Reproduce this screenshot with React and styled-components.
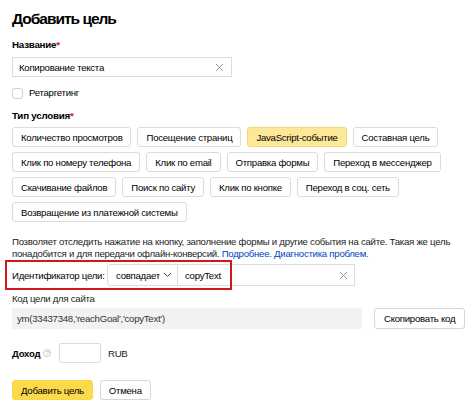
import React from "react";
import styled, { createGlobalStyle } from "styled-components";

const Global = createGlobalStyle`
  html, body { margin: 0; padding: 0; background: #fff; }
  body { font-family: "Liberation Sans", Arial, sans-serif; color: #000; }
  * { box-sizing: border-box; }
`;

const Page = styled.div`
  width: 474px;
  height: 408px;
  padding: 8px 12px 0 12px;
  display: flex;
  flex-direction: column;
  overflow: hidden;
  font-size: 9.6px;
  letter-spacing: -0.25px;
`;

const Title = styled.h1`
  margin: 0;
  font-size: 15.5px;
  line-height: 22px;
  font-weight: 700;
  letter-spacing: -1px;
`;

const Label = styled.div`
  font-size: 9.8px;
  line-height: 14px;
  font-weight: 700;
  margin-top: ${(p) => p.$mt || 0}px;
  & span { color: #e61400; }
`;

const TextInput = styled.div`
  margin-top: ${(p) => p.$mt || 0}px;
  width: ${(p) => p.$w}px;
  height: ${(p) => p.$h || 20}px;
  flex-shrink: 0;
  border: 1px solid #dcdcdc;
  border-radius: ${(p) => p.$r || 0}px;
  display: flex;
  align-items: center;
  padding: 0 7px 0 6px;
  color: #000;
  background: #fff;
  justify-content: space-between;
`;

const Cross = () => (
  <svg width="9" height="9" viewBox="0 0 9 9">
    <path d="M1 1L8 8M8 1L1 8" stroke="#9a9a9a" strokeWidth="1" />
  </svg>
);

const CheckRow = styled.label`
  margin-top: 9px;
  display: flex;
  align-items: center;
  gap: 6px;
  line-height: 14px;
`;

const Box = styled.span`
  width: 11px;
  height: 11px;
  border: 1px solid #cfcfcf;
  border-radius: 3px;
  background: #fff;
`;

const Chips = styled.div`
  margin-top: 4px;
  display: flex;
  flex-direction: column;
  gap: 5px;
`;

const ChipRow = styled.div`
  display: flex;
  gap: 6px;
`;

const Chip = styled.div`
  height: 20px;
  padding: 0 8px;
  display: flex;
  align-items: center;
  flex-shrink: 0;
  border: 1px solid ${(p) => (p.$on ? "#f0d878" : "#dcdcdc")};
  background: ${(p) => (p.$on ? "#fde89a" : "#fff")};
  border-radius: 3px;
  white-space: nowrap;
`;

const Para = styled.p`
  margin: 14px 0 0 0;
  line-height: 11.5px;
  color: #222;
  white-space: nowrap;
  & a { color: #0044bb; text-decoration: none; }
`;

const IdRow = styled.div`
  position: relative;
  margin-top: 5px;
  height: 22px;
  display: flex;
  align-items: center;
`;

const Highlight = styled.div`
  position: absolute;
  left: -7px;
  top: -4px;
  width: 227px;
  height: 30px;
  border: 2px solid #d2161e;
  pointer-events: none;
`;

const IdLabel = styled.span`
  width: 95px;
  flex-shrink: 0;
  white-space: nowrap;
`;

const Select = styled.div`
  height: 22px;
  width: 71px;
  flex-shrink: 0;
  border: 1px solid #dcdcdc;
  border-radius: 3px 0 0 3px;
  display: flex;
  align-items: center;
  gap: 3px;
  padding-left: 8px;
  white-space: nowrap;
`;

const IdInput = styled.div`
  height: 22px;
  width: 177px;
  flex-shrink: 0;
  border: 1px solid #dcdcdc;
  border-left: none;
  display: flex;
  align-items: center;
  justify-content: space-between;
  padding: 0 6px 0 7px;
`;

const SubLabel = styled.div`
  margin-top: 6px;
  line-height: 14px;
  color: #222;
`;

const CodeRow = styled.div`
  margin-top: 2px;
  display: flex;
  align-items: center;
  gap: 12px;
`;

const CodeBox = styled.div`
  width: 350px;
  flex-shrink: 0;
  height: 21px;
  background: #f2f2f2;
  display: flex;
  align-items: center;
  padding-left: 5px;
  color: #333;
  white-space: nowrap;
`;

const Btn = styled.div`
  height: ${(p) => p.$h || 21}px;
  padding: 0 ${(p) => p.$px || 9}px;
  display: flex;
  align-items: center;
  flex-shrink: 0;
  border: 1px solid ${(p) => (p.$primary ? "#fbd64a" : "#d6d6d6")};
  background: ${(p) => (p.$primary ? "#fdd94c" : "#fff")};
  border-radius: 3px;
  white-space: nowrap;
`;

const IncomeRow = styled.div`
  margin-top: 14px;
  display: flex;
  align-items: center;
`;

const IncomeLabel = styled.span`
  font-weight: 700;
  display: flex;
  align-items: center;
  gap: 3px;
  width: 47px;
  flex-shrink: 0;
`;

const Help = styled.span`
  width: 8px;
  height: 8px;
  border: 1px solid #c8c8c8;
  border-radius: 50%;
  font-size: 6px;
  font-weight: 400;
  color: #b0b0b0;
  display: inline-flex;
  align-items: center;
  justify-content: center;
`;

const Currency = styled.span`
  margin-left: 7px;
  color: #222;
`;

const Actions = styled.div`
  margin-top: 17px;
  display: flex;
  gap: 7px;
`;

const chipRows = [
  [["Количество просмотров"], ["Посещение страниц"], ["JavaScript-событие", true], ["Составная цель"]],
  [["Клик по номеру телефона"], ["Клик по email"], ["Отправка формы"], ["Переход в мессенджер"]],
  [["Скачивание файлов"], ["Поиск по сайту"], ["Клик по кнопке"], ["Переход в соц. сеть"]],
  [["Возвращение из платежной системы"]],
];

export default function App() {
  return (
    <Page>
      <Global />
      <Title>Добавить цель</Title>
      <Label $mt={8}>
        Название<span>*</span>
      </Label>
      <TextInput $mt={5} $w={220}>
        Копирование текста
        <Cross />
      </TextInput>
      <CheckRow>
        <Box />
        Ретаргетинг
      </CheckRow>
      <Label $mt={9}>
        Тип условия<span>*</span>
      </Label>
      <Chips>
        {chipRows.map((row, i) => (
          <ChipRow key={i}>
            {row.map(([t, on]) => (
              <Chip key={t} $on={on}>
                {t}
              </Chip>
            ))}
          </ChipRow>
        ))}
      </Chips>
      <Para>
        Позволяет отследить нажатие на кнопку, заполнение формы и другие события на сайте. Такая же цель
        <br />
        понадобится и для передачи офлайн-конверсий. <a>Подробнее.</a> <a>Диагностика проблем.</a>
      </Para>
      <IdRow>
        <Highlight />
        <IdLabel>Идентификатор цели:</IdLabel>
        <Select>
          совпадает
          <svg width="9" height="6" viewBox="0 0 9 6">
            <path d="M1 1L4.5 4.5L8 1" stroke="#444" strokeWidth="1" fill="none" />
          </svg>
        </Select>
        <IdInput>
          copyText
          <Cross />
        </IdInput>
      </IdRow>
      <SubLabel>Код цели для сайта</SubLabel>
      <CodeRow>
        <CodeBox>ym(33437348,'reachGoal','copyText')</CodeBox>
        <Btn>Скопировать код</Btn>
      </CodeRow>
      <IncomeRow>
        <IncomeLabel>
          Доход <Help>?</Help>
        </IncomeLabel>
        <TextInput $w={42} $r={2} />
        <Currency>RUB</Currency>
      </IncomeRow>
      <Actions>
        <Btn $primary $h={20} $px={8}>Добавить цель</Btn>
        <Btn $h={20} $px={8}>Отмена</Btn>
      </Actions>
    </Page>
  );
}
